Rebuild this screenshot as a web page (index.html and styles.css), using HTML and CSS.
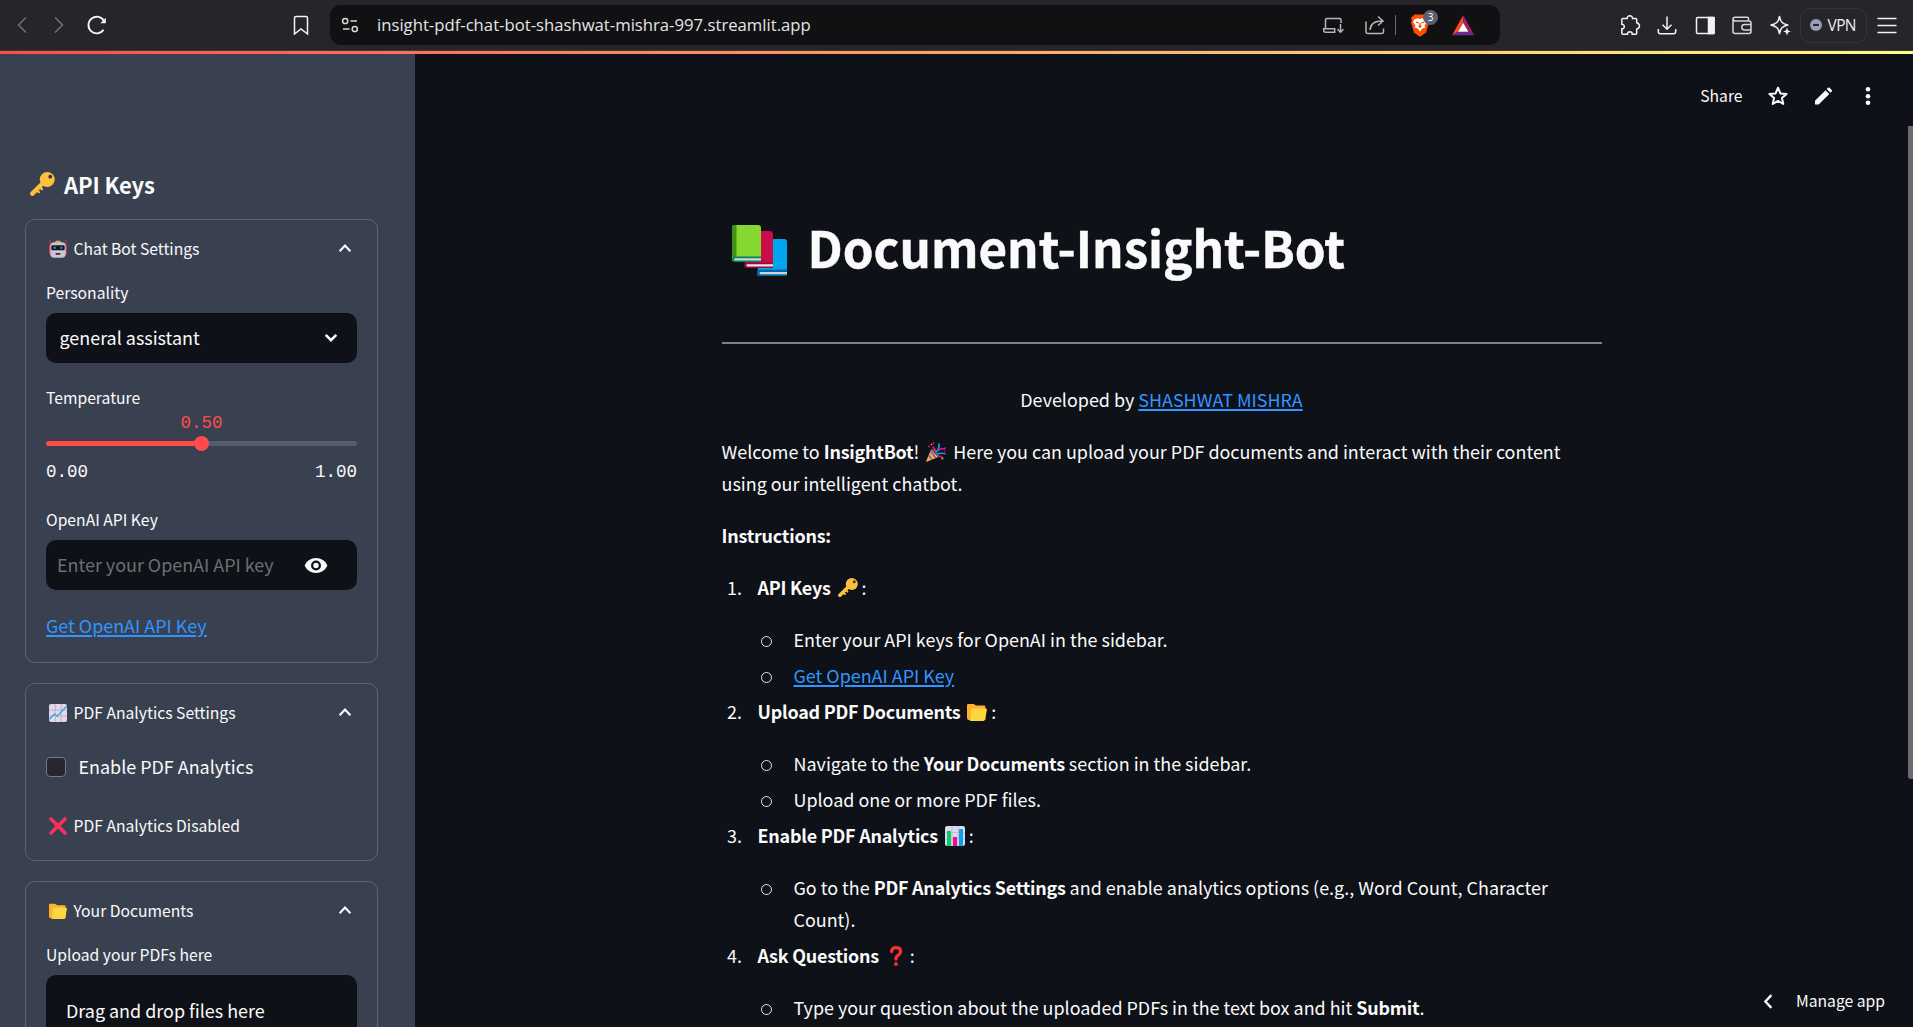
FILE: index.html
```html
<!DOCTYPE html>
<html lang="en">
<head>
<meta charset="utf-8">
<title>Document-Insight-Bot</title>
<link rel="stylesheet" href="styles.css">
</head>
<body>
<svg class="defs" width="0" height="0">
  <symbol id="key" viewBox="0 0 20 20"><path d="M10 9.2 1.9 17.3" stroke="#fbc13c" stroke-width="3.6" stroke-linecap="round"/><path d="M5.2 14.2l1.9 1.9M7.6 11.8l1.9 1.9" stroke="#fbc13c" stroke-width="1.8" stroke-linecap="round"/><circle cx="13.8" cy="6" r="6" fill="#fbc13c"/><circle cx="16.2" cy="3.7" r="1.5" fill="#39352f"/></symbol>
  <symbol id="folder" viewBox="0 0 20 20"><path d="M0 3.200Q0 2 1.200 2h5.300q.8 0 1.300.6l1 1h8.300q1.300 0 1.300 1.200V18H2q-2 0-2-2z" fill="#ffb02e"/><path d="M5 6.500h13.700q1.500 0 1.200 1.400l-1.800 9.300q-.3 1.800-2 1.800H2.200q1.200-.3 1.300-1.700L4 7.600q.1-1.100 1-1.100z" fill="#fcd53f"/></symbol>
  <symbol id="chev-up" viewBox="0 0 14 10"><path d="M1.600 8.200 7 2.600l5.400 5.600" fill="none" stroke="#fafafa" stroke-width="2.100"/></symbol>
</svg>

<nav class="browser">
  <svg class="ic back" viewBox="0 0 24 24"><path d="M16 4.500 8.500 12l7.500 7.500" stroke="#717077"/></svg>
  <svg class="ic forward" viewBox="0 0 24 24"><path d="M8 4.500l7.500 7.500L8 19.500" stroke="#717077"/></svg>
  <svg class="ic reload" viewBox="0 0 24 24"><path d="M18.600 16.800A8.300 8.300 0 1 1 19 8" stroke-width="1.900"/><path d="M20.800 4.800v5.500h-5.500z" fill="#f2f2f3" stroke="none"/></svg>
  <svg class="ic bookmark" viewBox="0 0 24 24"><path d="M5.500 5q0-1.500 1.500-1.500h10q1.500 0 1.500 1.500v16L12 16l-6.500 5z"/></svg>
  <div class="address">
    <svg class="ic tune" viewBox="0 0 24 24"><g stroke="#d8d8da"><circle cx="7.200" cy="8" r="2.600"/><path d="M12.500 8H19M5 16h6.500"/><circle cx="16.800" cy="16" r="2.600"/></g></svg>
    <span class="url">insight-pdf-chat-bot-shashwat-mishra-997.streamlit.app</span>
    <svg class="ic install" viewBox="0 0 24 24"><path d="M4.500 15.500V7q0-1.500 1.500-1.500h12.500q1.500 0 1.500 1.500v3M2.700 15.700h11v3.600H4.700q-2 0-2-2zM19.500 11v8M16.500 16.300l3 3 3-3" stroke="#b4b6b9" stroke-width="1.500"/></svg>
    <svg class="ic share" viewBox="0 0 24 24"><path d="M3 8.500V18.500q0 2 2 2h13.500q2 0 2-2v-3M7 17c.3-6 4-9 12.500-9M15 3.500 20 8l-5 4.500" stroke="#b4b6b9"/></svg>
    <span class="divider"></span>
    <span class="brave">
      <svg class="ic" viewBox="0 0 24 24"><path d="M6.500 1.500h11l2 2 1.500 1-.8 3.500.8 1.500-3 10L12 23.800 6 19.500 3 9.500 3.800 8 3 4.500l1.500-1z" fill="#ff4f00" stroke="none"/><path d="M6 6.500l3.500-1.200L12 6l2.500-.7L18 6.500l1 2.800-2.500 3.300.8 1.800-3 1.200L12 18.500l-2.300-2.900-3-1.200.8-1.800L5 9.300z" fill="#fff" stroke="none"/><path d="M8 9.200l2.800.8M16 9.200l-2.800.8M12 10v4l-1.500-1.300M12 14l1.500-1.300" stroke="#ff4f00" stroke-width="1.300"/></svg>
      <b class="count">3</b>
    </span>
    <svg class="ic bat" viewBox="0 0 24 24"><g stroke="none"><path d="M12.200 2.300 1 22.200l6-3.400 5.200-9z" fill="#ff4724"/><path d="M12.200 2.300v7.500l5.200 9 6 3.400z" fill="#9e1f63"/><path d="M1 22.200h22.400l-6-3.400H7z" fill="#662d91"/><path d="M12.200 9.800 7 18.800h10.400z" fill="#fff"/></g></svg>
  </div>
  <svg class="ic ext" viewBox="0 0 24 24"><path d="M5.500 5.500h3.700c-.5-3.600 5.700-3.600 5.300 0h3.200q1 0 1 1v3.300c3.700 1 3.700 5.300 0 6.200v4.200q0 1-1 1h-3.500c.4-3.300-5-3.300-4.700 0H4.800q-1 0-1-1v-4.400c3.300.2 3.300-4.700 0-4.600V6.500q0-1 1-1z"/></svg>
  <svg class="ic" viewBox="0 0 24 24"><path d="M12 3.500V16M7.500 11.800 12 16.300l4.500-4.500M3.300 16v2.500q0 2.300 2.300 2.300h12.800q2.300 0 2.300-2.300V16"/></svg>
  <svg class="ic" viewBox="0 0 24 24"><rect x="3.500" y="4.500" width="17.500" height="16" rx="1"/><path d="M15.500 4.500H21v16h-5.500z" fill="#f2f2f3"/></svg>
  <svg class="ic" viewBox="0 0 24 24"><path d="M18.500 8V5.500q0-1.300-1.300-1.300H5Q3 4.200 3 6v12.500q0 2 2 2h14q2 0 2-2V10q0-2-2-2H5.200Q3 7.800 3 6M21 11.500h-6.500a2.700 2.700 0 0 0 0 5.400H21" stroke="#d8d8da"/></svg>
  <svg class="ic" viewBox="0 0 24 24"><path d="M11.500 3.500c1 5.500 2.700 7.200 8.300 8.500-5.600 1.500-7.300 3-8.300 8.500-1-5.500-2.700-7-8.500-8.500 5.800-1.300 7.500-3 8.500-8.500z" stroke-linejoin="round"/><path d="M19 14.800v7M15.500 18.300h7" stroke="#26252a" stroke-width="4"/><path d="M19 14.600l1.100 2.800 2.800 1.100-2.800 1.100-1.100 2.800-1.100-2.800-2.800-1.100 2.800-1.100z" fill="#f2f2f3" stroke="none"/></svg>
  <div class="vpn"><i></i>VPN</div>
  <svg class="ic menu" viewBox="0 0 24 24"><path d="M2.500 5.500h19M2.500 12.500h19M2.500 19.500h19"/></svg>
</nav>
<div class="loading"></div>

<div class="app">
  <aside class="sidebar">
    <h2><svg class="key-lg"><use href="#key"/></svg>API Keys</h2>

    <section class="card chat">
      <header>
        <svg class="em" viewBox="0 0 18 18"><path d="M.6 0h1.100v6H.6zM16.300 0h1.100v6h-1.100z" fill="#ca3148"/><rect x="0" y="5" width="3" height="9.500" rx="1.500" fill="#d3385a"/><rect x="15" y="5" width="3" height="9.500" rx="1.500" fill="#d3385a"/><path d="M6 2.500q0-2 3-2t3 2z" fill="#f9a738"/><rect x="1.300" y="2.200" width="15.400" height="15.600" rx="4" fill="#cdc4d6"/><rect x="2.300" y="5.300" width="13.400" height="5" rx="1.300" fill="#17181f"/><circle cx="5.700" cy="7.800" r="1.300" fill="#1189c8"/><circle cx="12.300" cy="7.800" r="1.300" fill="#1189c8"/><rect x="6.500" y="13" width="5" height="1.700" rx=".8" fill="#302e38"/></svg>
        <span>Chat Bot Settings</span><svg class="chev"><use href="#chev-up"/></svg>
      </header>
      <label class="l-person">Personality</label>
      <div class="field select"><span>general assistant</span><svg class="chev" viewBox="0 0 14 10"><path d="M1.700 1.800 7 7.200l5.300-5.400" fill="none" stroke="#fafafa" stroke-width="2.600"/></svg></div>
      <label class="l-temp">Temperature</label>
      <div class="value">0.50</div>
      <div class="track"><i></i></div>
      <div class="ticks"><span>0.00</span><span>1.00</span></div>
      <label class="l-key">OpenAI API Key</label>
      <div class="field input"><span>Enter your OpenAI API key</span><svg class="eye" viewBox="0 0 24 16"><path d="M0 8C2 3 6.600 0 12 0s10 3 12 8c-2 5-6.600 8-12 8S2 13 0 8z" fill="#fafafa"/><circle cx="12" cy="8" r="5.300" fill="#0e1117"/><circle cx="12" cy="8" r="2.900" fill="#fafafa"/></svg></div>
      <a class="side-link" href="#">Get OpenAI API Key</a>
    </section>

    <section class="card analytics">
      <header>
        <svg class="em" viewBox="0 0 18 18"><rect width="18" height="18" rx="2" fill="#e1d8ec"/><path d="M6.300 0v18M12.200 0v18M0 6h18M0 12h18" stroke="#b4acbc" stroke-width=".8"/><path d="M.3 15.300 5.500 10l2.800 2.200L17.800 2" fill="none" stroke="#26a3e8" stroke-width="1.300"/></svg>
        <span>PDF Analytics Settings</span><svg class="chev"><use href="#chev-up"/></svg>
      </header>
      <div class="check"><i></i>Enable PDF Analytics</div>
      <p class="disabled"><svg class="em" viewBox="0 0 18 18"><path d="M2 2l14 14M16 2 2 16" stroke="#fb2f5b" stroke-width="3.600" stroke-linecap="round"/></svg>PDF Analytics Disabled</p>
    </section>

    <section class="card docs">
      <header><svg class="em"><use href="#folder"/></svg><span>Your Documents</span><svg class="chev"><use href="#chev-up"/></svg></header>
      <label class="l-upload">Upload your PDFs here</label>
      <div class="drop">Drag and drop files here</div>
    </section>
  </aside>

  <main>
    <div class="toolbar">
      <span>Share</span>
      <svg class="tool" viewBox="0 0 24 24"><path d="M12 3.700l2.400 5.700 6.200.5-4.700 4.100 1.400 6L12 16.900 6.700 20l1.400-6-4.700-4.100 6.200-.5z" fill="none" stroke="#fafafa" stroke-width="2" stroke-linejoin="round"/></svg>
      <svg class="tool" viewBox="0 0 24 24"><path d="M4 20.500v-3.700L14.600 6.200l3.700 3.700L7.700 20.500zM15.700 5.100l1.300-1.300q.8-.7 1.600 0l2.100 2.100q.7.8 0 1.600l-1.300 1.300z" fill="#fafafa"/></svg>
      <svg class="tool" viewBox="0 0 24 24"><g fill="#fafafa"><circle cx="12" cy="5.300" r="2.300"/><circle cx="12" cy="12.200" r="2.300"/><circle cx="12" cy="18.800" r="2.300"/></g></svg>
    </div>
    <article>
      <h1><svg class="books" viewBox="0 0 55 51"><path d="M27 14h25q3 0 3 3v33.500H25.500z" fill="#00a6ed"/><path d="M29 44.500h26V51H28q-3 0-3-3.500t4-3z" fill="#0067a8"/><path d="M28 47h27v2.300H28q-1-1.200 0-2.300z" fill="#d3d3d3"/><path d="M14 6h23.500q3.500 0 3.500 3v33H13z" fill="#ca0b4a"/><path d="M16 37.500h25V43H15.500q-3.500 0-3.500-3t4-2.500z" fill="#990838"/><path d="M15 39.200h26v2.200H15q-1.200-1.100 0-2.200z" fill="#e6e6e6"/><path d="M0 3Q0 0 3 0h23q3 0 3 3v33H0z" fill="#86d72f"/><path d="M3 0h1.500v32H0V3Q0 0 3 0z" fill="#44911b"/><path d="M3.500 31.500H29V37H3q-3 0-3-3 0-2.500 3.500-2.500z" fill="#008463"/><path d="M2.500 33.300H29v2.200H2.500q-1-1.100 0-2.200z" fill="#d3d3d3"/></svg>Document-Insight-Bot</h1>
      <hr>
      <p class="dev">Developed by <a href="#">SHASHWAT MISHRA</a></p>
      <p>Welcome to <b>InsightBot</b>! <svg class="emo" viewBox="0 0 20 20"><path d="M5 7.500 12.300 15 .8 19.800Q0 20 .2 19.200z" fill="#ffb02e"/><path d="M4.500 9 10 16.200M2.800 13.200 6 17.800" stroke="#6d5fd0" stroke-width="1.700"/><path d="M5 7.500q5 1.500 7.300 7.200" stroke="#8c5543" stroke-width="1.800" fill="none"/><path d="M6.500 5q3 1.500 3 5M12 14q3 0 4.500 2" stroke="#f70a8d" stroke-width="1.400" fill="none"/><path d="M9.500 10.500q4-3 3.500-9M11 12.500q3-2 8.500-.7" stroke="#00a6ed" stroke-width="1.600" fill="none"/><path d="M12.500 9 15 6.500l3 .5 1.800-1.500" stroke="#f70a8d" stroke-width="1.600" fill="none"/><g fill="#f70a8d"><circle cx="3" cy="4.500" r=".9"/><circle cx="7.500" cy=".9" r=".9"/><circle cx="18.500" cy="9" r=".7"/></g><circle cx="5.500" cy="2.500" r=".8" fill="#ffb02e"/><circle cx="16.500" cy="16.500" r=".9" fill="#ffb02e"/></svg> Here you can upload your PDF documents and interact with their content using our intelligent chatbot.</p>
      <p><b>Instructions:</b></p>
      <ol>
        <li><span class="num">1.</span><b>API Keys <svg class="emo"><use href="#key"/></svg></b>:
          <ul><li>Enter your API keys for OpenAI in the sidebar.</li><li><a href="#">Get OpenAI API Key</a></li></ul></li>
        <li><span class="num">2.</span><b>Upload PDF Documents <svg class="emo"><use href="#folder"/></svg></b>:
          <ul><li>Navigate to the <b>Your Documents</b> section in the sidebar.</li><li>Upload one or more PDF files.</li></ul></li>
        <li><span class="num">3.</span><b>Enable PDF Analytics <svg class="emo" viewBox="0 0 20 20"><rect width="20" height="20" rx="2.200" fill="#e1d8ec"/><path d="M7 0v20M13 0v20M0 6.500h20M0 13h20" stroke="#c3b9cf" stroke-width=".9"/><path d="M2 5h4v15H2z" fill="#00d26a"/><path d="M8 11h4v9H8z" fill="#f70a8d"/><path d="M14 3h4v17h-4z" fill="#00a6ed"/></svg></b>:
          <ul><li>Go to the <b>PDF Analytics Settings</b> and enable analytics options (e.g., Word Count, Character Count).</li></ul></li>
        <li><span class="num">4.</span><b>Ask Questions <svg class="emo" viewBox="0 0 20 20"><path d="M5.500 5.500Q6 1.700 10 1.700q4.500 0 4.500 3.800 0 2.300-2.200 3.600Q10 10.500 10 13" fill="none" stroke="#f8312f" stroke-width="3.300" stroke-linecap="round"/><circle cx="10" cy="18" r="1.900" fill="#f8312f"/></svg></b>:
          <ul><li>Type your question about the uploaded PDFs in the text box and hit <b>Submit</b>.</li></ul></li>
      </ol>
    </article>
    <div class="manage"><svg viewBox="0 0 10 16"><path d="M8.600 1.200 2.200 8l6.400 6.800" fill="none" stroke="#fafafa" stroke-width="2.500"/></svg>Manage app</div>
    <div class="scroll"></div>
  </main>
</div>
</body>
</html>
```
FILE: styles.css
```css
* { box-sizing: border-box; }
body {
  margin: 0;
  width: 1913px;
  height: 1027px;
  overflow: hidden;
  background: #0e1117;
  color: #fafafa;
  font: 400 17.93px/32px "Noto Sans CJK SC", sans-serif;
}
svg { display: block; flex: none; }
.defs { position: absolute; }
h1, h2, p, ol, ul { margin: 0; padding: 0; list-style: none; }
a { color: #2f95ff; text-decoration: underline; text-decoration-thickness: 1.5px; text-underline-offset: 2px; }
article b { letter-spacing: -.22px; }

/* browser bar */
.browser {
  display: flex;
  align-items: center;
  height: 51px;
  padding-left: 9.5px;
  background: #26252a;
  border-bottom: 1px solid #37363c;
}
.ic { width: 24px; height: 24px; fill: none; stroke: #f2f2f3; stroke-width: 1.5; margin-left: 13.5px; }
.back { margin-left: 0; }
.bookmark { margin-left: 180px; }
.address {
  display: flex;
  align-items: center;
  width: 1170px;
  height: 40px;
  margin-left: 17.5px;
  padding: 0 25px 0 8px;
  border-radius: 11px;
  background: #111113;
}
.address .ic { margin-left: 0; }
.url { margin-left: 15px; font: 16.7px/24px "Open Sans", sans-serif; color: #e4e4e6; }
.address .install { margin-left: auto; }
.address .share { margin-left: 18px; }
.divider { width: 1.5px; height: 20px; margin: 0 12px 0 8px; background: #6b6b70; }
.brave { position: relative; margin-right: 19px; }
.count {
  position: absolute;
  left: 15px;
  top: -3px;
  width: 15px;
  height: 15px;
  border-radius: 50%;
  background: #5d5e70;
  color: #fff;
  font: 400 10px/15px "Open Sans", sans-serif;
  text-align: center;
}
.ext { margin-left: 117.5px; }
.vpn {
  display: flex;
  align-items: center;
  width: 67px;
  height: 35px;
  margin-left: 8px;
  padding-left: 9px;
  border: 1px solid #35343b;
  border-radius: 10px;
  color: #ececee;
  font: 15.5px/24px "Open Sans", sans-serif;
  letter-spacing: -.6px;
}
.vpn i { display: flex; align-items: center; width: 12px; height: 12px; margin-right: 6px; border-radius: 50%; background: #9a9db3; }
.vpn i::before { content: ""; width: 6px; height: 2px; margin: auto; background: #2b2a33; }
.menu { margin-left: 8.5px; }
.loading { height: 3px; background: linear-gradient(90deg, #ff4b4b, #fffd80); }

.app { display: flex; height: 973px; }

/* sidebar */
.sidebar { width: 415px; padding: 114px 37px 0 25px; background: #394151; overflow: hidden; font-size: 15.69px; line-height: 28px; }
h2 { display: flex; align-items: center; height: 32px; margin-bottom: 19px; font-size: 22px; line-height: 32px; font-weight: 700; letter-spacing: -.15px; }
.key-lg { width: 25px; height: 25px; margin: 0 9px 0 5px; }
.card { margin-bottom: 20px; padding: 15px 20px 0; border: 1px solid #5f6673; border-radius: 10px; }
.chat { height: 444px; }
.analytics { height: 178px; }
.docs { height: 200px; }
header { display: flex; align-items: center; height: 28px; }
.em { width: 18px; height: 18px; margin: 0 6.500px 0 3px; }
header .chev { margin: -3px 5.500px 0 auto; }
.chev { width: 14px; height: 10px; }
label { display: block; height: 28px; }
.l-person { margin-top: 16px; }
.field { display: flex; align-items: center; height: 50px; padding-bottom: 2px; border-radius: 10px; background: #0e1117; font-size: 17.93px; line-height: 32px; }
.select { margin: 6px 0 21px; padding-left: 13.5px; }
.select .chev { margin: 2px 19px 0 auto; }
.value { height: 20px; margin-top: 1px; color: #ff4b4b; font: 17.5px/20px "Liberation Mono", monospace; text-align: center; }
.track { height: 5px; margin: 8px 0 14px; border-radius: 3px; background: linear-gradient(90deg, #ff4b4b 50%, #555c6b 50%); }
.track i { display: block; position: relative; top: -5px; width: 15px; height: 15px; margin: 0 auto; border-radius: 50%; background: #ff4b4b; }
.ticks { display: flex; justify-content: space-between; height: 24px; font: 17.5px/24px "Liberation Mono", monospace; }
.l-key { margin-top: 22px; }
.input { margin: 6px 0 19px; padding-left: 11px; color: #6d6f73; }
.eye { width: 24px; height: 15px; margin: 2px 29px 0 auto; }
.side-link { display: block; font-size: 17.93px; line-height: 32px; }
.check { display: flex; align-items: center; height: 32px; margin: 23px 0 30px; font-size: 17.93px; line-height: 32px; }
.check i { width: 20px; height: 20px; margin: 2px 12.500px 0 0; border: 1px solid #777b86; border-radius: 4px; background: #262730; }
.disabled { display: flex; align-items: center; height: 28px; }
.l-upload { margin-top: 16px; }
.drop { height: 120px; margin-top: 6px; padding: 19px 20px; border-radius: 10px; background: #0e1117; font-size: 17.93px; line-height: 32px; }

/* main */
main { position: relative; flex: 1; }
.toolbar { display: flex; align-items: center; height: 84px; padding-right: 33.5px; font-size: 15.69px; line-height: 28px; }
.toolbar span { margin: 0 23px 0 auto; }
.tool { width: 24px; height: 24px; }
.tool + .tool { margin-left: 21px; }
article { width: 880px; margin-left: 306.5px; }
h1 { display: flex; align-items: center; height: 66px; margin-top: 76px; font-size: 49.3px; line-height: 66px; font-weight: 700; -webkit-text-stroke: .5px #fafafa; }
.books { width: 55px; height: 51px; margin: 6px 20.5px 0 10.5px; }
hr { height: 2px; margin: 62px 0 39px; border: 0; background: #808080; }
p + p { margin-top: 20px; }
.dev { text-align: center; }
.emo { display: inline-block; width: 20px; height: 20px; margin: 0 3px; vertical-align: -3px; }
b .emo { margin-right: 4px; }
ol { margin-top: 20px; }
ol > li { position: relative; padding-left: 36px; margin-bottom: 4px; }
.num { display: inline-block; width: 30.5px; margin-left: -30.5px; }
ul { margin-top: 20px; }
ul > li { display: block; position: relative; margin-bottom: 4px; padding-left: 36px; }
ul > li::before { content: ""; position: absolute; left: 3.5px; top: 13px; width: 9px; height: 9px; border: 1.5px solid #e4e4e5; border-radius: 50%; }
.manage { position: absolute; right: 28px; bottom: 10px; display: flex; align-items: center; height: 32px; font-size: 15.69px; }
.manage svg { width: 10px; height: 15px; margin-right: 23px; }
.scroll { position: absolute; right: 0; top: 72px; width: 5px; height: 653px; background: #6b6b6b; border-radius: 0 0 0 3px; }
```
